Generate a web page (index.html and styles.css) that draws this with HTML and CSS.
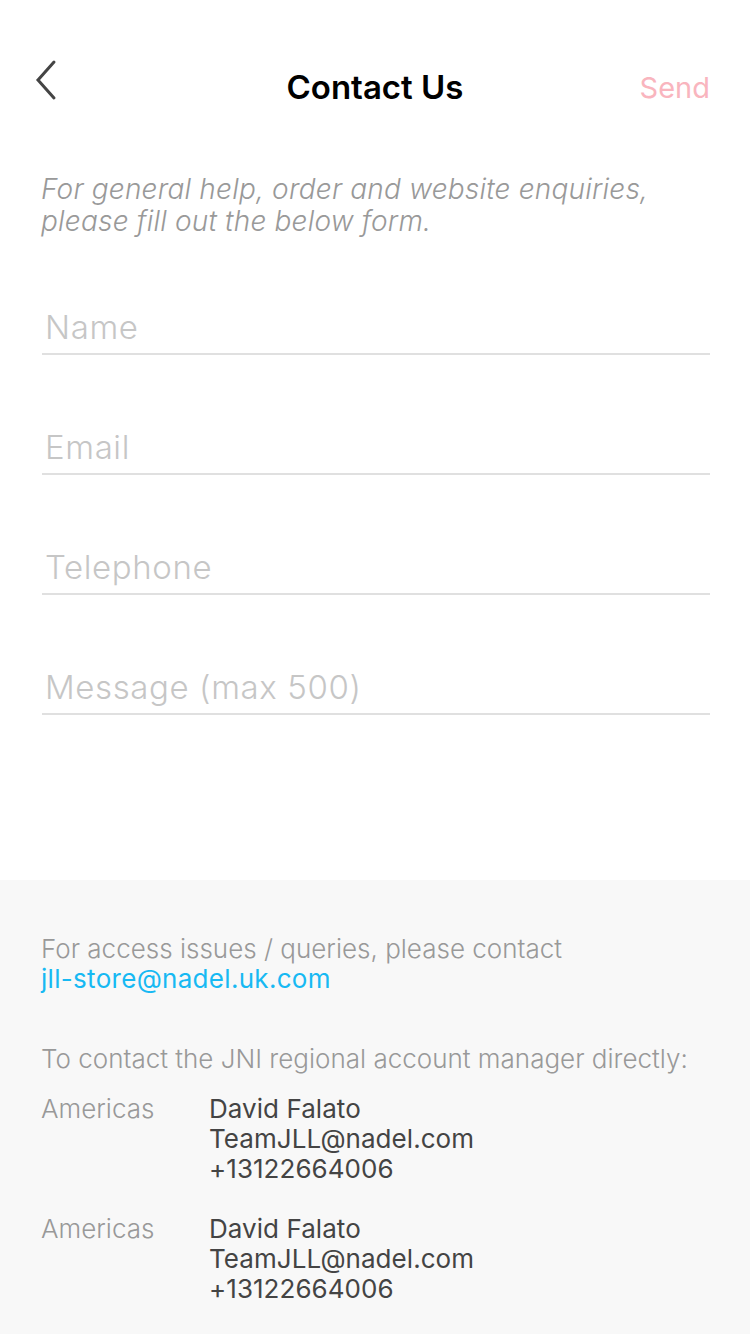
FILE: index.html
```html
<!DOCTYPE html>
<html lang="en">
<head>
<meta charset="utf-8">
<title>Contact Us</title>
<link rel="stylesheet" href="styles.css">
</head>
<body>
<div class="page">
  <header class="nav">
    <a class="back" href="#" aria-label="Back">
      <svg width="24" height="42" viewBox="0 0 24 42"><polyline points="20,3 4,21 20,39" fill="none" stroke="#444" stroke-width="3" stroke-linecap="round" stroke-linejoin="miter"/></svg>
    </a>
    <h1 class="title">Contact Us</h1>
    <a class="send" href="#">Send</a>
  </header>

  <p class="intro">For general help, order and website enquiries,<br>please fill out the below form.</p>

  <form class="form">
    <div class="field"><span class="placeholder">Name</span></div>
    <div class="field"><span class="placeholder">Email</span></div>
    <div class="field"><span class="placeholder">Telephone</span></div>
    <div class="field"><span class="placeholder">Message (max 500)</span></div>
  </form>

  <section class="info">
    <p class="note">For access issues / queries, please contact<br><a class="link" href="#">jll-store@nadel.uk.com</a></p>
    <p class="note lead">To contact the JNI regional account manager directly:</p>
    <div class="contact">
      <span class="region">Americas</span>
      <div class="details">David Falato<br>TeamJLL@nadel.com<br>+13122664006</div>
    </div>
    <div class="contact">
      <span class="region">Americas</span>
      <div class="details">David Falato<br>TeamJLL@nadel.com<br>+13122664006</div>
    </div>
  </section>
</div>
</body>
</html>
```
FILE: styles.css
```css
* { box-sizing: border-box; }
html, body { margin: 0; padding: 0; }
body {
  font-family: Inter, Roboto, "Liberation Sans", sans-serif;
  background: #fff;
  width: 750px;
  height: 1334px;
  overflow: hidden;
}
.page {
  display: flex;
  flex-direction: column;
  height: 1334px;
}
.nav {
  margin-top: 40px;
  height: 94px;
  display: flex;
  align-items: center;
  justify-content: space-between;
  padding: 0 40px 0 34px;
  position: relative;
}
.back {
  display: flex;
  margin-top: -14px;
}
.title {
  margin: 0;
  font-size: 33px;
  font-weight: 600;
  color: #000;
  position: absolute;
  left: 0;
  right: 0;
  text-align: center;
  pointer-events: none;
}
.send {
  font-size: 29px;
  color: #f9b5be;
  text-decoration: none;
}
.intro {
  margin: 39px 0 0;
  padding: 0 41px;
  font-size: 28px;
  letter-spacing: 0.2px;
  line-height: 32px;
  font-style: italic;
  font-weight: 300;
  color: #999;
}
.form {
  padding: 0 40px 0 42px;
  display: flex;
  flex-direction: column;
}
.field {
  height: 120px;
  display: flex;
  align-items: flex-end;
  border-bottom: 2px solid #e0e0e0;
  padding: 0 0 6px 3px;
}
.field:first-child { height: 118px; }
.placeholder {
  font-size: 33px;
  letter-spacing: 0.6px;
  line-height: 40px;
  font-weight: 300;
  color: #c6c6c6;
}
.info {
  margin-top: auto;
  height: 454px;
  background: #f8f8f8;
  padding: 54px 40px 0 41px;
  font-size: 26px;
  line-height: 30px;
}
.note {
  margin: 0;
  font-weight: 300;
  color: #999;
}
.link {
  color: #17b9f3;
  text-decoration: none;
  font-weight: 400;
  letter-spacing: 0.3px;
}
.lead {
  margin-top: 50px;
  margin-bottom: 20px;
}
.contact {
  display: flex;
  margin-bottom: 30px;
}
.region {
  width: 168px;
  flex: none;
  font-weight: 300;
  color: #999;
}
.details {
  color: #444;
  letter-spacing: 0.05px;
}
```
